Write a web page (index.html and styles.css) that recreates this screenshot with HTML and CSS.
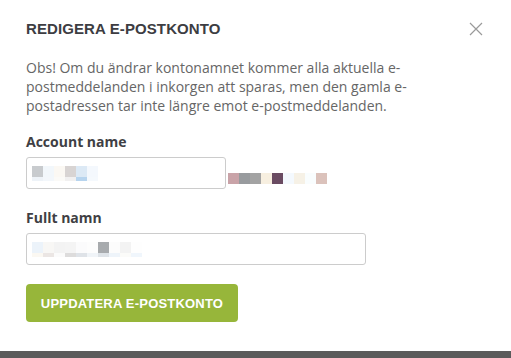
FILE: index.html
```html
<!DOCTYPE html>
<html lang="sv">
<head>
<meta charset="utf-8">
<title>Redigera e-postkonto</title>
<link rel="stylesheet" href="styles.css">
</head>
<body>
<div class="page">
  <div class="modal">
    <div class="modal-header">
      <h2 class="modal-title">REDIGERA E-POSTKONTO</h2>
      <button class="close" aria-label="Stäng">
        <svg width="14" height="14" viewBox="0 0 14 14"><path d="M1 1 L13 13 M13 1 L1 13" stroke="#9a9a9a" stroke-width="1.2" fill="none"/></svg>
      </button>
    </div>
    <p class="notice">Obs! Om du ändrar kontonamnet kommer alla aktuella e-postmeddelanden i inkorgen att sparas, men den gamla e-postadressen tar inte längre emot e-postmeddelanden.</p>

    <div class="field">
      <label class="label">Account name</label>
      <div class="input-row">
        <div class="input short">
          <div class="blur">
            <div class="blur-row top">
              <span style="background:#c8cbce"></span><span style="background:#f2f7fb"></span><span style="background:#fbf8f3"></span><span style="background:#d8d4d3"></span><span style="background:#dce9f5"></span><span style="background:#f4f8fd"></span>
            </div>
            <div class="blur-row bottom">
              <span style="background:#eef3f8"></span><span style="background:#f3f7fb"></span><span style="background:#fbfaf7"></span><span style="background:#f1f0f0"></span><span style="background:#b7d4ee"></span><span style="background:#f5f9fd"></span>
            </div>
          </div>
        </div>
        <div class="domain">
          <span style="background:#c9a3a8"></span><span style="background:#989b9e"></span><span style="background:#a3a3a3"></span><span style="background:#f7efe0"></span><span style="background:#6a4b62"></span><span style="background:#f4f9fe"></span><span style="background:#f6f1e6"></span><span style="background:#f9fdfe"></span><span style="background:#dbc2bb"></span>
        </div>
      </div>
    </div>

    <div class="field second">
      <label class="label">Fullt namn</label>
      <div class="input long">
        <div class="blur">
          <div class="blur-row top">
            <span style="background:#ecf3fa"></span><span style="background:#f8f7f5"></span><span style="background:#f3f3f3"></span><span style="background:#f4f4f4"></span><span style="background:#fbfbfc"></span><span style="background:#fdfdfd"></span><span style="background:#a8abae"></span><span style="background:#fcfcfc"></span><span style="background:#f3f3f3"></span><span style="background:#fefefe"></span>
          </div>
          <div class="blur-row bottom">
            <span style="background:#fbf8f2"></span><span style="background:#ebe6e4"></span><span style="background:#fbfbfb"></span><span style="background:#dddcdc"></span><span style="background:#dfe3e8"></span><span style="background:#f0f4f8"></span><span style="background:#dee3e8"></span><span style="background:#eef4fa"></span><span style="background:#fbfbf9"></span><span style="background:#f0f6fc"></span>
          </div>
        </div>
      </div>
    </div>

    <button class="submit">UPPDATERA E-POSTKONTO</button>
  </div>
  <div class="bottom-bar"></div>
</div>
</body>
</html>
```

FILE: styles.css
```css
* { box-sizing: border-box; }
html, body { margin: 0; padding: 0; }
body {
  background: #fff;
  font-family: "Open Sans", "Liberation Sans", sans-serif;
  width: 511px;
  height: 358px;
  overflow: hidden;
}
.page {
  height: 358px;
  display: flex;
  flex-direction: column;
}
.modal {
  flex: 1;
  padding: 19px 26px 0 26px;
}
.modal-header {
  display: flex;
  justify-content: space-between;
  align-items: center;
  height: 20px;
}
.modal-title {
  margin: 0;
  font-family: "Liberation Sans", Arial, sans-serif;
  font-weight: bold;
  font-size: 15px;
  letter-spacing: 0.1px;
  color: #3d3d42;
  line-height: 20px;
}
.close {
  border: 0;
  background: none;
  padding: 0;
  margin-right: 2px;
  width: 14px;
  height: 14px;
  display: flex;
}
.notice {
  margin: 19px 0 0 0;
  font-size: 14px;
  line-height: 19px;
  color: #666;
  width: 400px;
}
.field { margin-top: 17px; }
.field.second { margin-top: 19px; }
.label {
  display: block;
  font-weight: bold;
  font-size: 14px;
  line-height: 19px;
  color: #3f3f44;
  margin-bottom: 6px;
}
.input-row {
  display: flex;
  align-items: flex-end;
}
.input {
  height: 32px;
  border: 1px solid #ccc;
  border-radius: 3px;
  background: #fff;
  display: flex;
  align-items: center;
  padding-left: 5px;
}
.input.short { width: 200px; }
.input.long { width: 340px; }
.blur {
  display: flex;
  flex-direction: column;
}
.blur-row { display: flex; }
.blur-row span { width: 11px; display: block; }
.blur-row.top span { height: 11px; }
.blur-row.bottom span { height: 4px; }
.domain {
  display: flex;
  margin-left: 2px;
  margin-bottom: 5px;
}
.domain span { width: 11px; height: 11px; display: block; }
.submit {
  display: block;
  margin-top: 19px;
  width: 212px;
  height: 38px;
  border: 0;
  border-radius: 4px;
  background: #97b63a;
  color: #fff;
  font-family: "Liberation Sans", Arial, sans-serif;
  font-weight: bold;
  font-size: 13px;
  letter-spacing: 0.2px;
  padding: 0;
}
.bottom-bar {
  height: 7px;
  background: #5b5b5b;
}
```
